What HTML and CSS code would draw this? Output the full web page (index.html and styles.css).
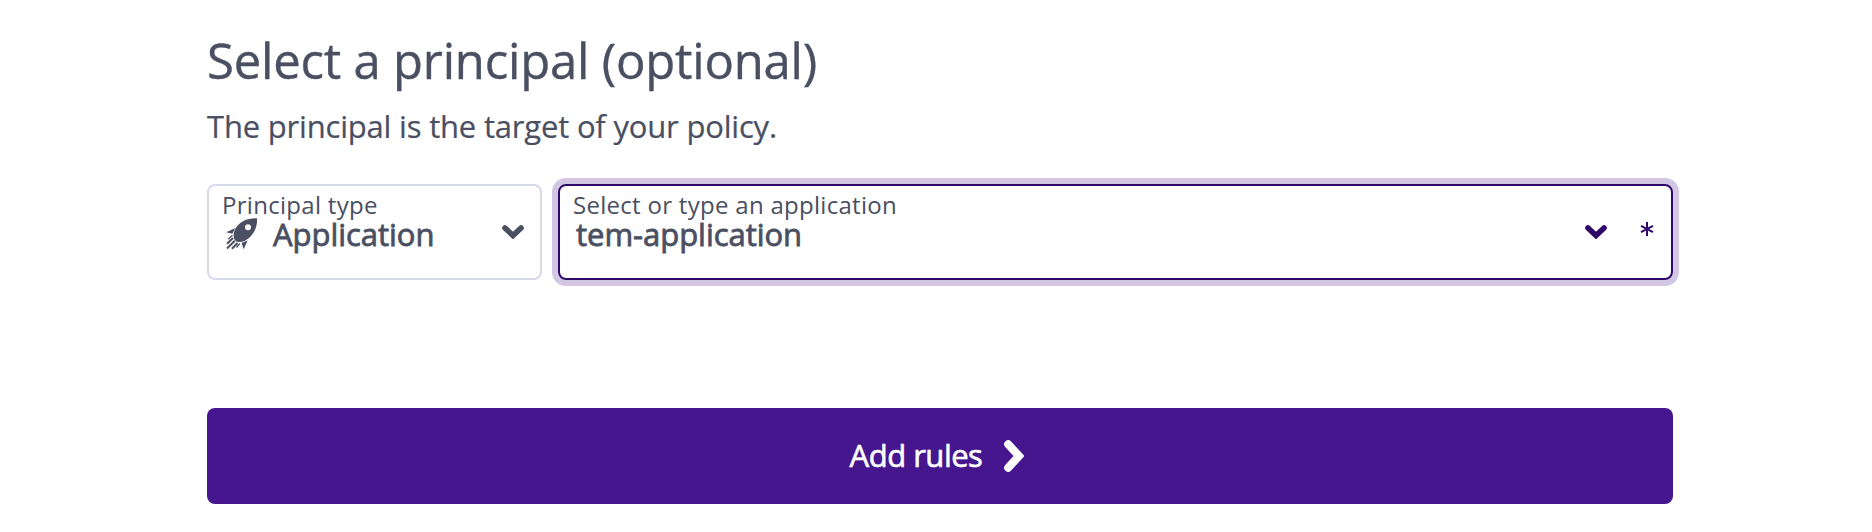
FILE: index.html
```html
<!DOCTYPE html>
<html lang="en">
<head>
<meta charset="utf-8">
<title>Select a principal</title>
<link rel="stylesheet" href="styles.css">
</head>
<body>
<main class="form">
  <h1 class="title"><span>Select a principal (optional)</span></h1>
  <p class="subtitle"><span>The principal is the target of your policy.</span></p>
  <div class="fields">
    <div class="field field-type">
      <div class="content">
        <label class="label">Principal type</label>
        <div class="value value-type">
          <svg class="rocket" viewBox="0 0 32 32">
            <path d="M31 .3C21 -.2 13.500 4 9.500 10.500C7.400 14.500 7 19 8.600 21.700C10.500 24.700 14.500 24.600 18.500 23C26.500 19 31.800 10 31 .3ZM22 6.300A3 3 0 1 1 22 12.300A3 3 0 1 1 22 6.300Z" fill-rule="evenodd"/>
            <path d="M.2 14.300L9.300 10L6.300 15.700ZM15.500 25L21.600 22.500L17.800 31.200Z"/>
            <path class="trail" d="M7 20L1 25.700M8.800 22.800L1 30.500M11.500 25L6 30.800"/>
            <path class="trail-thin" d="M6.500 17.300L2.200 21.300M13.800 25.500L10.500 29.500"/>
          </svg>
          <span class="app-text">Application</span>
        </div>
      </div>
      <svg class="chevron" viewBox="0 0 22 14"><path d="M3 3L11 10.500L19 3"/></svg>
    </div>
    <div class="field field-app">
      <div class="content">
        <label class="label">Select or type an application</label>
        <div class="value value-app"><span>tem-application</span></div>
      </div>
      <svg class="chevron" viewBox="0 0 22 14"><path d="M3 3L11 10.500L19 3"/></svg>
      <svg class="asterisk" viewBox="0 0 14 14"><path d="M7 0V14M1 3.900L13 10.100M13 3.900L1 10.100"/></svg>
    </div>
  </div>
  <button class="submit" type="button">
    <span class="submit-text">Add rules</span>
    <svg class="arrow" viewBox="0 0 20 32"><path d="M4.200 4.200L15 16L4.200 27.800"/></svg>
  </button>
</main>
</body>
</html>
```
FILE: styles.css
```css
* { box-sizing: border-box; }
body {
  margin: 0;
  background: #fff;
  color: #4a4f62;
  font-family: "Open Sans", "Noto Sans", sans-serif;
}
svg { display: block; flex: none; }
.form { width: 1466px; margin-left: 207px; padding-top: 30px; }
.title { margin: 0; font-size: 49px; line-height: 60px; font-weight: 400; letter-spacing: -0.2px; white-space: nowrap; -webkit-text-stroke: 0.4px currentColor; }
.subtitle { margin: 16px 0 0; font-size: 31px; line-height: 40px; letter-spacing: -0.19px; white-space: nowrap; -webkit-text-stroke: 0.2px currentColor; }
.fields { display: flex; gap: 16px; margin-top: 38px; }
.field {
  display: flex;
  height: 96px;
  padding: 5px 14px;
  border: 2px solid #d7dae8;
  border-radius: 8px;
}
.field-type { width: 335px; padding-left: 13px; padding-right: 16px; }
.field-app { flex: 1; color: #2f0769; border-color: #2f0769; box-shadow: 0 0 0 6px #d1c6e4; padding-left: 13px; padding-right: 17px; }
.content { flex: 1; color: #4a4f62; white-space: nowrap; }
.label { display: block; font-size: 24px; line-height: 28px; letter-spacing: 0.29px; }
.value { display: flex; margin-top: -1px; font-size: 31px; line-height: 32px; letter-spacing: -0.03px; -webkit-text-stroke: 0.8px currentColor; }
.value-type { padding-left: 4px; }
.value-app { padding-left: 3px; }
.rocket { width: 32px; height: 32px; margin-right: 15px; fill: currentColor; }
.trail, .trail-thin { fill: none; stroke: currentColor; stroke-width: 2; }
.trail-thin { stroke-width: 1.200; }
.chevron { width: 22px; height: 14px; margin-top: 34px; fill: none; stroke: currentColor; stroke-width: 5.600; stroke-linecap: round; }
.asterisk { width: 14px; height: 14px; margin: 31px 0 0 33px; fill: none; stroke: currentColor; stroke-width: 2; }
.submit {
  display: flex;
  align-items: center;
  justify-content: center;
  gap: 22px;
  width: 100%;
  height: 96px;
  margin-top: 128px;
  padding: 0 6px 0 0;
  border: 0;
  border-radius: 8px;
  background: #46168f;
  color: #fff;
  font: 400 31px/40px "Open Sans", "Noto Sans", sans-serif;
  letter-spacing: -0.5px;
}
.submit-text { margin-top: -2px; -webkit-text-stroke: 0.6px currentColor; }
.arrow { width: 20px; height: 32px; fill: none; stroke: #fff; stroke-width: 8; stroke-linecap: round; }
```
